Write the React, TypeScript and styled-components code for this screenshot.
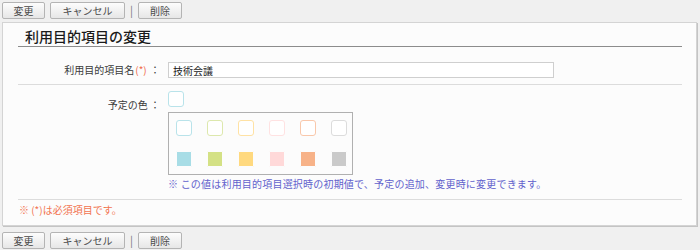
import React from "react";
import styled, { createGlobalStyle } from "styled-components";

const Global = createGlobalStyle`
  html, body { margin: 0; padding: 0; background: #f0f0f0; }
  body { font-family: "Noto Sans CJK JP", "Noto Sans", sans-serif; font-size: 10px; color: #333; }
`;

const Page = styled.div`
  width: 700px;
  height: 250px;
  padding-top: 2px;
  box-sizing: border-box;
`;

const ButtonBar = styled.div<{ $bottom?: boolean }>`
  display: flex;
  align-items: center;
  height: 17px;
  padding-left: 2px;
  margin-top: ${(p) => (p.$bottom ? "6px" : "0")};
`;

const Button = styled.button<{ $w: number }>`
  width: ${(p) => p.$w}px;
  height: 17px;
  margin-right: 5px;
  padding: 0;
  box-sizing: border-box;
  border: 1px solid #b4b4b4;
  border-radius: 2px;
  background: linear-gradient(#fdfdfd, #e6e6e6);
  font-family: "Noto Sans CJK JP", sans-serif;
  font-size: 10px;
  line-height: 15px;
  color: #4a4a4a;
  letter-spacing: 0;
`;

const Sep = styled.span`
  margin: 0 5px 0 0;
  color: #777;
  font-size: 11px;
  line-height: 17px;
`;

const Panel = styled.div`
  margin: 3px 0 0 2px;
  width: 695px;
  height: 204px;
  box-sizing: border-box;
  background: #fcfcfc;
  border: 1px solid #d4d4d4;
  box-shadow: 1px 1px 0 #c4c4c4;
  padding: 0 14px 0 15px;
`;

const Title = styled.h2`
  margin: 0;
  padding: 3px 0 0 7px;
  height: 20px;
  border-bottom: 1px solid #8c8c8c;
  font-size: 14px;
  line-height: 20px;
  font-weight: 500;
  color: #1a1a1a;
`;

const Row = styled.div<{ $pt: number; $pb: number }>`
  display: grid;
  grid-template-columns: 142px 1fr;
  column-gap: 8px;
  padding: ${(p) => p.$pt}px 0 ${(p) => p.$pb}px 0;
  border-bottom: 1px solid #dcdcdc;
`;

const Label = styled.div<{ $top: number }>`
  text-align: right;
  padding-top: ${(p) => p.$top}px;
  line-height: 14px;
  color: #3a3a3a;
  white-space: nowrap;
`;

const Req = styled.span`
  color: #f06a4a;
  margin: 0 1px;
`;

const TextInput = styled.input`
  width: 386px;
  height: 16px;
  box-sizing: border-box;
  border: 1px solid #cfcfcf;
  background: #fff;
  padding: 0 4px;
  font-family: "Noto Sans CJK JP", sans-serif;
  font-size: 10px;
  color: #222;
  outline: none;
`;

const Field = styled.div`
  display: flex;
  flex-direction: column;
  align-items: flex-start;
`;

const Swatch = styled.div<{ $color: string; $filled?: boolean }>`
  width: 16px;
  height: 16px;
  box-sizing: border-box;
  border-radius: 3px;
  ${(p) =>
    p.$filled
      ? `background: ${p.$color}; border: 1px solid #fcfcfc; border-radius: 1px;`
      : `background: #fff; border: 1.5px solid ${p.$color};`}
`;

const Palette = styled.div`
  margin-top: 5px;
  width: 185px;
  height: 63px;
  box-sizing: border-box;
  border: 1px solid #b0b0b0;
  padding: 7px 0 0 7px;
  display: grid;
  grid-template-columns: repeat(6, 16px);
  grid-auto-rows: 16px;
  column-gap: 15px;
  row-gap: 15px;
`;

const Note = styled.div`
  margin-top: 2px;
  line-height: 14px;
  color: #6262cc;
  white-space: nowrap;
  letter-spacing: 0.2px;
`;

const Footer = styled.div`
  padding: 3px 0 0 1px;
  line-height: 14px;
  color: #f27450;
`;

const light = ["#b9e3ea", "#dde8ad", "#ffe2a4", "#ffe2e2", "#f9c8ab", "#dcdcdc"];
const solid = ["#a8dde6", "#d4e185", "#ffd97f", "#ffd9d9", "#f7b288", "#cacaca"];

function Buttons({ bottom }: { bottom?: boolean }) {
  return (
    <ButtonBar $bottom={bottom}>
      <Button $w={43}>変更</Button>
      <Button $w={75}>キャンセル</Button>
      <Sep>|</Sep>
      <Button $w={44}>削除</Button>
    </ButtonBar>
  );
}

export default function App() {
  return (
    <Page>
      <Global />
      <Buttons />
      <Panel>
        <Title>利用目的項目の変更</Title>
        <Row $pt={15} $pb={6}>
          <Label $top={1}>
            利用目的項目名<Req>(*)</Req> ：
          </Label>
          <Field>
            <TextInput defaultValue="技術会議" />
          </Field>
        </Row>
        <Row $pt={6} $pb={8}>
          <Label $top={7}>予定の色 ：</Label>
          <Field>
            <Swatch $color="#b9e3ea" />
            <Palette>
              {light.map((c) => (
                <Swatch key={"l" + c} $color={c} />
              ))}
              {solid.map((c) => (
                <Swatch key={"s" + c} $color={c} $filled />
              ))}
            </Palette>
            <Note>※ この値は利用目的項目選択時の初期値で、予定の追加、変更時に変更できます。</Note>
          </Field>
        </Row>
        <Footer>※ (*)は必須項目です。</Footer>
      </Panel>
      <Buttons bottom />
    </Page>
  );
}
